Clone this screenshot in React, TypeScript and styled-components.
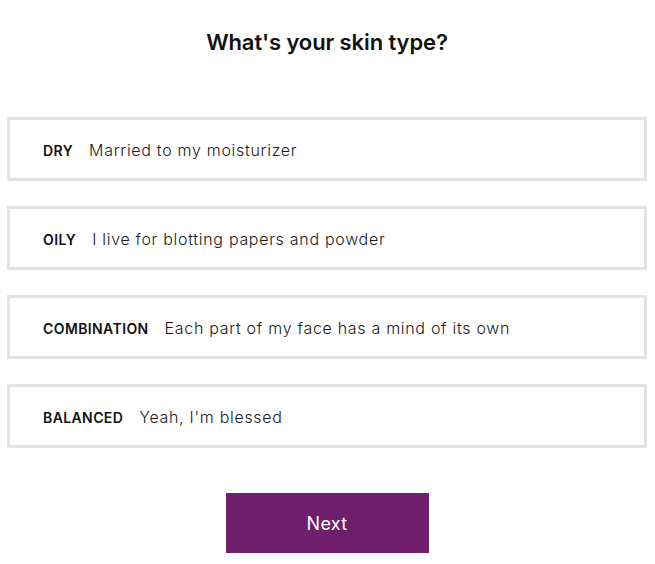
import React from "react";
import styled, { createGlobalStyle } from "styled-components";

const Global = createGlobalStyle`
  html, body { margin: 0; padding: 0; background: #ffffff; }
  body { font-family: Inter, "Noto Sans", sans-serif; color: #111; }
`;

const Page = styled.div`
  display: flex;
  flex-direction: column;
  align-items: center;
  padding: 0 8px 0 7px;
  width: 655px;
  box-sizing: border-box;
`;

const Title = styled.h1`
  margin: 28px 0 0;
  font-size: 22px;
  line-height: 28px;
  font-weight: 600;
  color: #111;
  letter-spacing: -0.1px;
`;

const Options = styled.div`
  display: flex;
  flex-direction: column;
  gap: 25px;
  width: 100%;
  margin-top: 61px;
`;

const Option = styled.button`
  display: flex;
  align-items: center;
  gap: 16px;
  height: 64px;
  width: 100%;
  box-sizing: border-box;
  padding: 2px 0 0 33px;
  border: 3px solid #e3e3e3;
  background: #fff;
  text-align: left;
  cursor: pointer;
  font-family: inherit;
`;

const Label = styled.span`
  font-size: 14px;
  font-weight: 600;
  letter-spacing: 0.4px;
  color: #111;
`;

const Desc = styled.span`
  font-size: 16px;
  font-weight: 300;
  letter-spacing: 0.7px;
  color: #1a1a1a;
`;

const NextButton = styled.button`
  margin-top: 45px;
  width: 203px;
  height: 60px;
  border: none;
  background: #701f6e;
  color: #fff;
  font-family: inherit;
  font-size: 18px;
  font-weight: 400;
  letter-spacing: 0.3px;
  cursor: pointer;
`;

const options = [
  { label: "DRY", desc: "Married to my moisturizer" },
  { label: "OILY", desc: "I live for blotting papers and powder" },
  { label: "COMBINATION", desc: "Each part of my face has a mind of its own" },
  { label: "BALANCED", desc: "Yeah, I'm blessed" },
];

export default function App() {
  return (
    <>
      <Global />
      <Page>
        <Title>What's your skin type?</Title>
        <Options>
          {options.map((o) => (
            <Option key={o.label}>
              <Label>{o.label}</Label>
              <Desc>{o.desc}</Desc>
            </Option>
          ))}
        </Options>
        <NextButton>Next</NextButton>
      </Page>
    </>
  );
}
